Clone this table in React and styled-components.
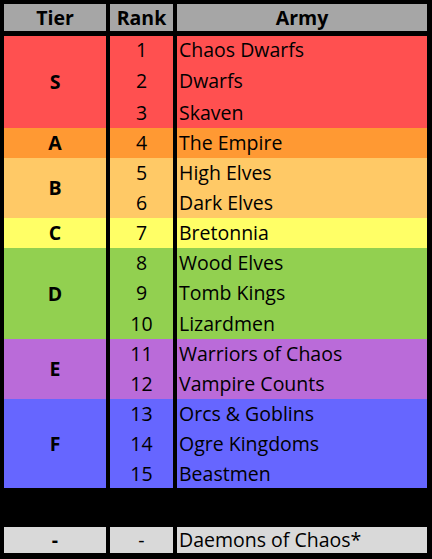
import React from 'react';
import styled, { createGlobalStyle } from 'styled-components';

const Global = createGlobalStyle`
  html, body {
    margin: 0;
    padding: 0;
    background: #000;
  }
  body {
    font-family: "Open Sans", "Noto Sans", Arial, sans-serif;
  }
`;

const Sheet = styled.div`
  width: 432px;
  height: 559px;
  box-sizing: border-box;
  background: #000;
  padding: 4px 5px 6px 4px;
  color: #000;
  font-size: 19.5px;
`;

const Grid = styled.div`
  display: grid;
  grid-template-columns: 102px 63px 250px;
  grid-template-rows: ${({ $rows }) => $rows};
  column-gap: 4px;
  margin-top: ${({ $gap }) => $gap || 0}px;
`;

const Cell = styled.div`
  display: flex;
  align-items: center;
  justify-content: ${({ $align }) => ($align === 'left' ? 'flex-start' : 'center')};
  padding-left: ${({ $align }) => ($align === 'left' ? '2px' : '0')};
  background: ${({ $bg }) => $bg};
  font-weight: ${({ $bold }) => ($bold ? 700 : 400)};
  white-space: nowrap;
  line-height: 1;
`;

const TierCell = styled(Cell)`
  grid-column: 1;
  grid-row: span ${({ $span }) => $span};
  font-weight: 700;
`;

const RankCell = styled(Cell)`
  grid-column: 2;
`;

const ArmyCell = styled(Cell)`
  grid-column: 3;
`;

const tiers = [
  { tier: 'S', bg: '#ff5050', rows: [[1, 'Chaos Dwarfs', 28], [2, 'Dwarfs', 34], [3, 'Skaven', 30]] },
  { tier: 'A', bg: '#ff9933', rows: [[4, 'The Empire', 30]] },
  { tier: 'B', bg: '#ffc966', rows: [[5, 'High Elves', 30], [6, 'Dark Elves', 30]] },
  { tier: 'C', bg: '#ffff66', rows: [[7, 'Bretonnia', 30]] },
  { tier: 'D', bg: '#92d050', rows: [[8, 'Wood Elves', 30], [9, 'Tomb Kings', 30], [10, 'Lizardmen', 31]] },
  { tier: 'E', bg: '#ba6bd9', rows: [[11, 'Warriors of Chaos', 30], [12, 'Vampire Counts', 30]] },
  { tier: 'F', bg: '#6666ff', rows: [[13, 'Orcs & Goblins', 30], [14, 'Ogre Kingdoms', 30], [15, 'Beastmen', 29]] },
];

const bodyRows = tiers.flatMap((t) => t.rows.map((r) => `${r[2]}px`)).join(' ');

export default function App() {
  return (
    <Sheet>
      <Global />
      <Grid $rows="27px">
        <Cell $bg="#a6a6a6" $bold>Tier</Cell>
        <Cell $bg="#a6a6a6" $bold>Rank</Cell>
        <Cell $bg="#a6a6a6" $bold>Army</Cell>
      </Grid>
      <Grid $rows={bodyRows} $gap={5}>
        {tiers.map((t) =>
          t.rows.map(([rank, army], i) => (
            <React.Fragment key={rank}>
              {i === 0 && (
                <TierCell $bg={t.bg} $span={t.rows.length}>
                  {t.tier}
                </TierCell>
              )}
              <RankCell $bg={t.bg}>{rank}</RankCell>
              <ArmyCell $bg={t.bg} $align="left">{army}</ArmyCell>
            </React.Fragment>
          ))
        )}
      </Grid>
      <Grid $rows="26px" $gap={39}>
        <Cell $bg="#d9d9d9" $bold>-</Cell>
        <Cell $bg="#d9d9d9">-</Cell>
        <Cell $bg="#d9d9d9" $align="left">Daemons of Chaos*</Cell>
      </Grid>
    </Sheet>
  );
}
